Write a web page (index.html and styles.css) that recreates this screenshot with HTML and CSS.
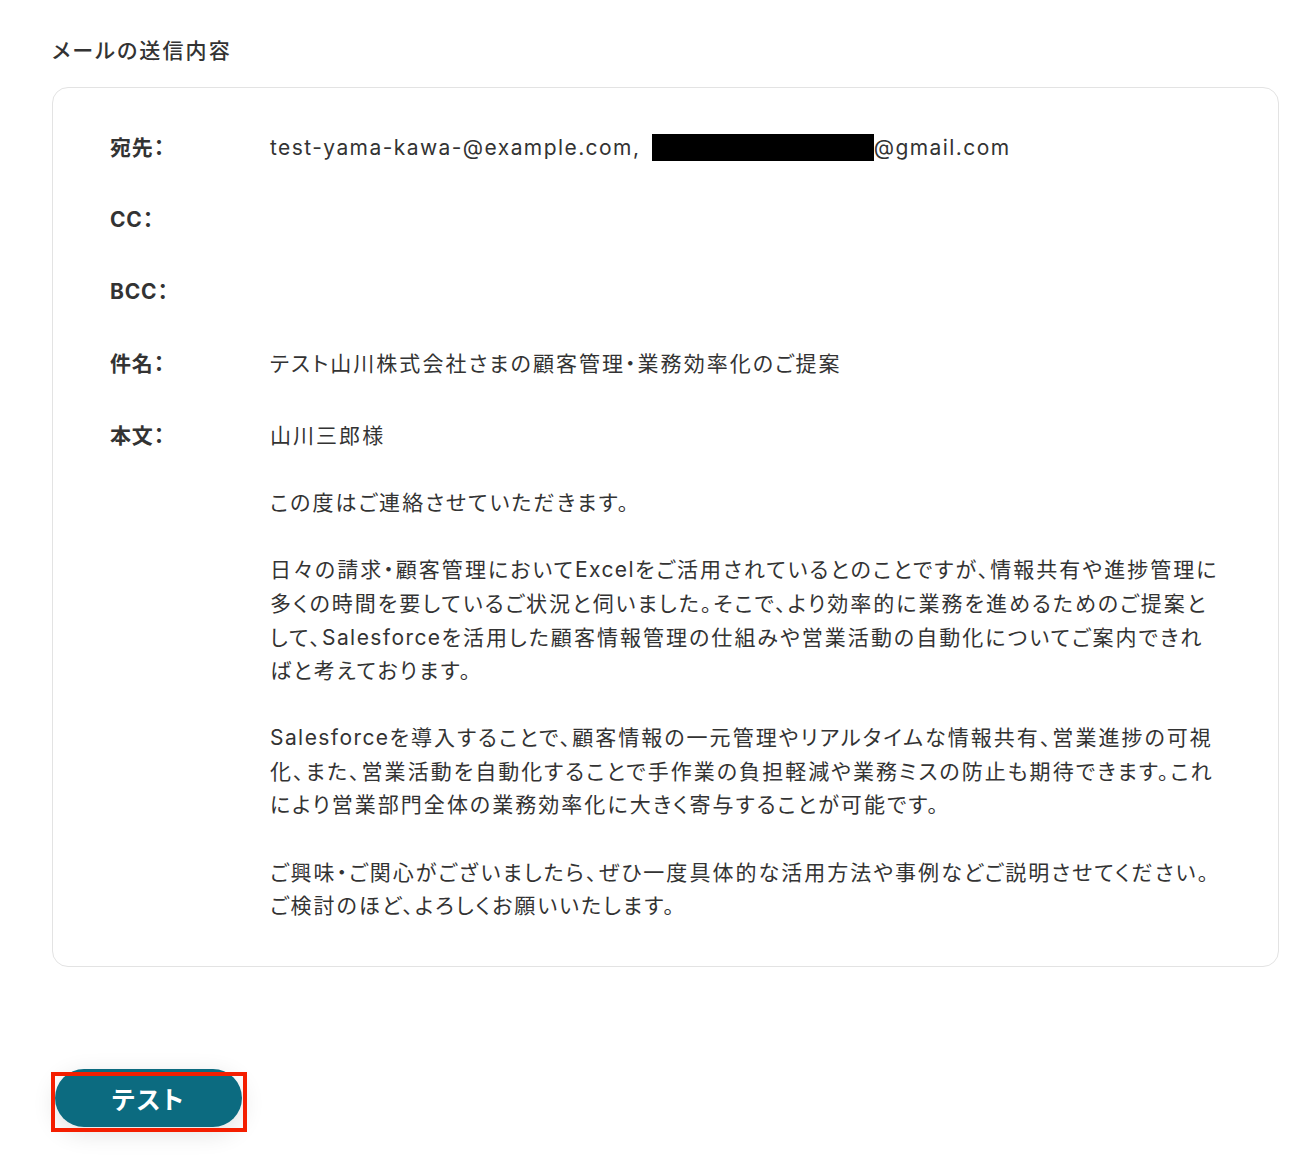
FILE: index.html
```html
<!DOCTYPE html>
<html lang="ja">
<head>
  <meta charset="UTF-8" />
  <title>メールの送信内容</title>
  <link rel="stylesheet" href="styles.css">
</head>
<body>

  <div class="page">
    <h2 class="section-title">メールの送信内容</h2>

    <div class="mail-card">
      <div class="mail-row">
        <div class="mail-label">宛先：</div>
        <div class="mail-value"><span class="en">test-yama-kawa-@example.com, </span><span class="masked"></span><span class="en">@gmail.com</span></div>
      </div>
      <div class="mail-row">
        <div class="mail-label">CC：</div>
        <div class="mail-value"></div>
      </div>
      <div class="mail-row">
        <div class="mail-label">BCC：</div>
        <div class="mail-value"></div>
      </div>
      <div class="mail-row">
        <div class="mail-label">件名：</div>
        <div class="mail-value">テスト山川株式会社さまの顧客管理・業務効率化のご提案</div>
      </div>
      <div class="mail-row">
        <div class="mail-label">本文：</div>
        <div class="mail-value mail-body">
          <p>山川三郎様</p>
          <p>この度はご連絡させていただきます。</p>
          <p>日々の請求・顧客管理において<span class="en">Excel</span>をご活用されているとのことですが、情報共有や進捗管理に多くの時間を要しているご状況と伺いました。そこで、より効率的に業務を進めるためのご提案として、<span class="en">Salesforce</span>を活用した顧客情報管理の仕組みや営業活動の自動化についてご案内できればと考えております。</p>
          <p><span class="en">Salesforce</span>を導入することで、顧客情報の一元管理やリアルタイムな情報共有、営業進捗の可視化、また、営業活動を自動化することで手作業の負担軽減や業務ミスの防止も期待できます。これにより営業部門全体の業務効率化に大きく寄与することが可能です。</p>
          <p>ご興味・ご関心がございましたら、ぜひ一度具体的な活用方法や事例などご説明させてください。<br>ご検討のほど、よろしくお願いいたします。</p>
        </div>
      </div>
    </div>

    <div class="actions">
      <div class="btn-wrap">
        <button class="test-btn">テスト</button>
        <span class="highlight"></span>
      </div>
    </div>
  </div>

</body>
</html>
```

FILE: styles.css
```css
html, body {
  margin: 0;
  padding: 0;
  background: #fff;
}
body {
  font-family: Inter, "Noto Sans CJK JP", sans-serif;
  font-feature-settings: "palt";
  color: #333;
}
.page {
  padding: 34px 0 0 52px;
}
.section-title {
  margin: 0 0 19px;
  font-size: 21px;
  font-weight: 500;
  line-height: 34px;
  letter-spacing: 0.1em;
  color: #333;
}
.mail-card {
  width: 1227px;
  box-sizing: border-box;
  border: 1px solid #e3e3e3;
  border-radius: 16px;
  padding: 43px 52px 43px 57px;
  display: flex;
  flex-direction: column;
  gap: 38.4px;
}
.mail-row {
  display: flex;
  font-size: 21px;
  line-height: 33.6px;
  letter-spacing: 0.097em;
}
.mail-label {
  width: 160px;
  flex-shrink: 0;
  font-weight: 700;
  letter-spacing: 0.04em;
}
.mail-value {
  flex: 1;
  min-height: 33.6px;
}
.en {
  letter-spacing: 0.068em;
}
.masked {
  display: inline-block;
  width: 222px;
  height: 27px;
  background: #000;
  vertical-align: -6px;
  margin-left: 4px;
}
.mail-body p {
  margin: 0 0 33.6px;
}
.mail-body p:last-child {
  margin-bottom: 0;
}
.actions {
  margin-top: 102px;
  padding-bottom: 40px;
}
.btn-wrap {
  position: relative;
  display: inline-block;
  margin-left: 3px;
  border-radius: 29px;
  box-shadow: 0 6px 24px rgba(0, 0, 0, 0.12);
}
.test-btn {
  display: block;
  width: 187px;
  height: 58px;
  border: none;
  border-radius: 29px;
  background: #0c6b80;
  color: #fff;
  font-family: Inter, "Noto Sans CJK JP", sans-serif;
  font-feature-settings: "palt";
  font-size: 25px;
  font-weight: 700;
  letter-spacing: 0.08em;
  cursor: pointer;
}
.highlight {
  position: absolute;
  left: -4px;
  top: 3px;
  width: 196px;
  height: 60px;
  box-sizing: border-box;
  border: 4px solid #f41e00;
  pointer-events: none;
}
```
